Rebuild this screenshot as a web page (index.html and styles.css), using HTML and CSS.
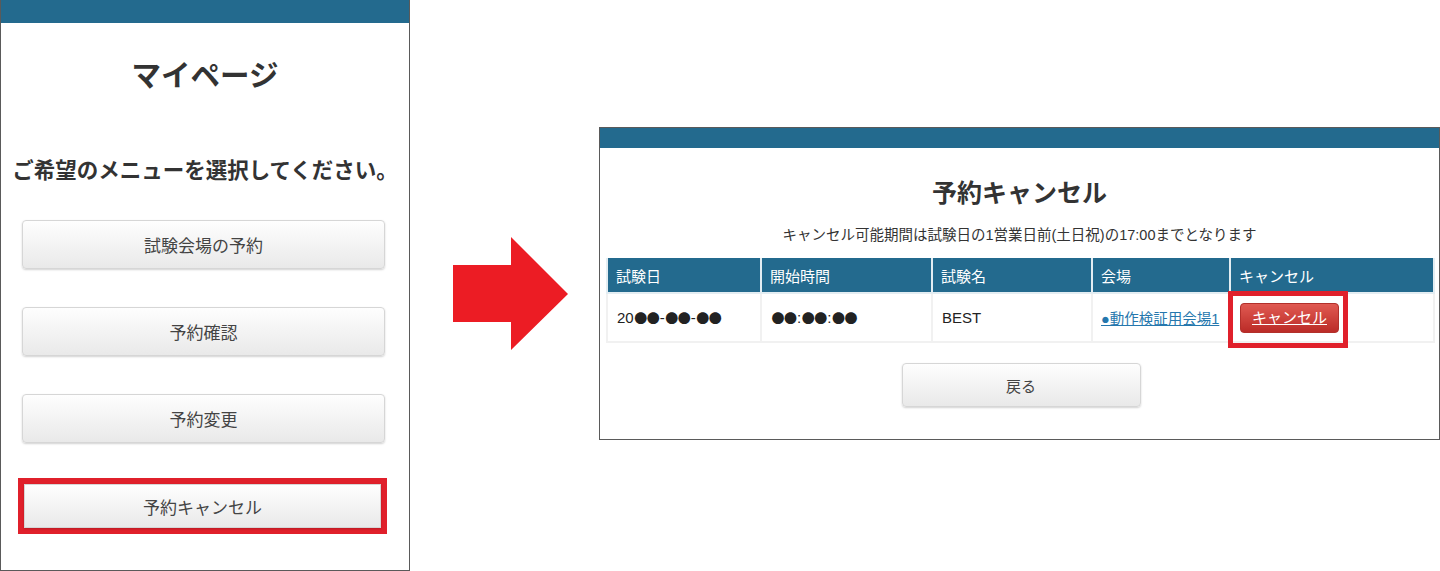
FILE: index.html
```html
<!DOCTYPE html>
<html lang="ja">
<head>
    <meta charset="UTF-8">
    <title>予約キャンセル手順</title>
    <link rel="stylesheet" href="styles.css">
</head>
<body>

<div class="screen">

    <!-- マイページ -->
    <div class="panel mypage">
        <div class="panel-bar"></div>
        <h1 class="mypage-title">マイページ</h1>
        <p class="mypage-lead">ご希望のメニューを選択してください。</p>
        <div class="menu">
            <a class="menu-btn" href="#">試験会場の予約</a>
            <a class="menu-btn" href="#">予約確認</a>
            <a class="menu-btn" href="#">予約変更</a>
            <div class="menu-mark">
                <a class="menu-btn" href="#">予約キャンセル</a>
            </div>
        </div>
    </div>

    <!-- 矢印 -->
    <div class="arrow">
        <svg width="115" height="113" viewBox="0 0 115 113">
            <polygon points="0,28 58,28 58,0 115,57 58,113 58,85 0,85" fill="#ec1c24"/>
        </svg>
    </div>

    <!-- 予約キャンセル -->
    <div class="panel cancel-page">
        <div class="panel-bar"></div>
        <h2 class="cancel-title">予約キャンセル</h2>
        <p class="cancel-note">キャンセル可能期間は試験日の1営業日前(土日祝)の17:00までとなります</p>

        <table class="booking">
            <thead>
                <tr>
                    <th class="col-date">試験日</th>
                    <th class="col-time">開始時間</th>
                    <th class="col-exam">試験名</th>
                    <th class="col-place">会場</th>
                    <th class="col-cancel">キャンセル</th>
                </tr>
            </thead>
            <tbody>
                <tr>
                    <td>20<span class="dots">●●</span>-<span class="dots">●●</span>-<span class="dots">●●</span></td>
                    <td><span class="dots">●●</span>:<span class="dots">●●</span>:<span class="dots">●●</span></td>
                    <td class="exam-name">BEST</td>
                    <td class="place-cell"><a class="place-link" href="#">●動作検証用会場1</a></td>
                    <td class="cancel-cell">
                        <a class="cancel-btn" href="#">キャンセル</a>
                        <span class="mark-box"></span>
                    </td>
                </tr>
            </tbody>
        </table>

        <div class="back-row">
            <a class="back-btn" href="#">戻る</a>
        </div>
    </div>

</div>

</body>
</html>
```

FILE: styles.css
```css
body {
    margin: 0;
    padding: 0;
    background-color: #fff;
    color: #333;
    font-family: "Liberation Sans", "Noto Sans CJK JP", sans-serif;
}

.screen {
    display: flex;
    align-items: flex-start;
    width: 1440px;
    height: 571px;
}

.panel {
    border: 1px solid #5a5a5a;
    background-color: #fff;
    box-sizing: border-box;
}

.panel-bar {
    background-color: #236a8e;
}

/* 左側：マイページ */
.mypage {
    width: 410px;
    height: 571px;
    border-top: none;
}

.mypage .panel-bar {
    height: 23px;
}

.mypage-title {
    margin: 35px 0 0;
    font-size: 29.5px;
    line-height: 36px;
    text-align: center;
    font-weight: bold;
    color: #333;
}

.mypage-lead {
    margin: 65px 0 0;
    font-size: 21.5px;
    line-height: 25px;
    font-weight: bold;
    text-align: center;
    color: #333;
}

.menu {
    display: flex;
    flex-direction: column;
    gap: 38px;
    margin-top: 36px;
    padding: 0 24px 0 21px;
}

.menu-btn {
    display: flex;
    align-items: center;
    justify-content: center;
    height: 49px;
    box-sizing: border-box;
    background: linear-gradient(#fefefe, #e9e9e9);
    border: 1px solid #d6d6d6;
    border-radius: 4px;
    box-shadow: 0 1px 2px rgba(0, 0, 0, 0.18);
    font-size: 17px;
    color: #444;
    text-decoration: none;
}

.menu-mark {
    margin: -3px -2px 0 -4px;
    border: 6px solid #e0202b;
}

.menu-mark .menu-btn {
    height: 44px;
    border-radius: 0;
}

/* 矢印 */
.arrow {
    margin: 237px 31px 0 43px;
    line-height: 0;
}

/* 右側：予約キャンセル */
.cancel-page {
    width: 841px;
    height: 313px;
    margin-top: 127px;
}

.cancel-page .panel-bar {
    height: 20px;
}

.cancel-title {
    margin: 30px 0 0;
    font-size: 25px;
    line-height: 30px;
    text-align: center;
    font-weight: bold;
    color: #333;
}

.cancel-note {
    margin: 17px 0 0;
    font-size: 14.5px;
    line-height: 20px;
    text-align: center;
    color: #333;
}

.booking {
    margin: 13px 3px 0 6px;
    width: 829px;
    border-collapse: collapse;
    table-layout: fixed;
    font-size: 15px;
}

.booking th {
    box-sizing: border-box;
    height: 35px;
    padding: 0 8px;
    background-color: #236a8e;
    color: #fff;
    font-weight: normal;
    text-align: left;
    border: 2px solid #e3edf2;
    border-top: none;
}

.booking td {
    height: 47px;
    padding: 0 9px;
    border: 2px solid #f1f1f1;
    color: #222;
}

.col-date { width: 154px; }
.col-time { width: 171px; }
.col-exam { width: 160px; }
.col-place { width: 138px; }

.dots {
    font-family: "Noto Sans CJK JP", sans-serif;
    font-size: 13px;
    letter-spacing: -0.5px;
    margin: 0 0.5px;
}

.exam-name {
    padding-top: 4px;
}

.place-cell {
    white-space: nowrap;
}

.booking .place-cell {
    padding: 0 4px 0 8px;
}

.place-link {
    color: #2577ad;
    font-size: 14.5px;
}

.cancel-cell {
    position: relative;
}

.cancel-btn {
    display: inline-block;
    width: 99px;
    height: 30px;
    line-height: 28px;
    box-sizing: border-box;
    text-align: center;
    background: linear-gradient(#e05a52, #bb2b27);
    border: 1px solid #b2302b;
    border-radius: 4px;
    color: #fff;
    font-size: 15px;
}

/* 赤枠（注記） */
.mark-box {
    position: absolute;
    left: -3px;
    top: -3px;
    width: 120px;
    height: 57px;
    box-sizing: border-box;
    border: 5px solid #e0202b;
}

.back-row {
    display: flex;
    justify-content: center;
    margin-top: 20px;
    padding-left: 3px;
}

.back-btn {
    display: flex;
    align-items: center;
    justify-content: center;
    width: 239px;
    height: 44px;
    box-sizing: border-box;
    background: linear-gradient(#fefefe, #e9e9e9);
    border: 1px solid #d6d6d6;
    border-radius: 4px;
    box-shadow: 0 1px 2px rgba(0, 0, 0, 0.18);
    font-size: 15px;
    color: #444;
    text-decoration: none;
}
```
